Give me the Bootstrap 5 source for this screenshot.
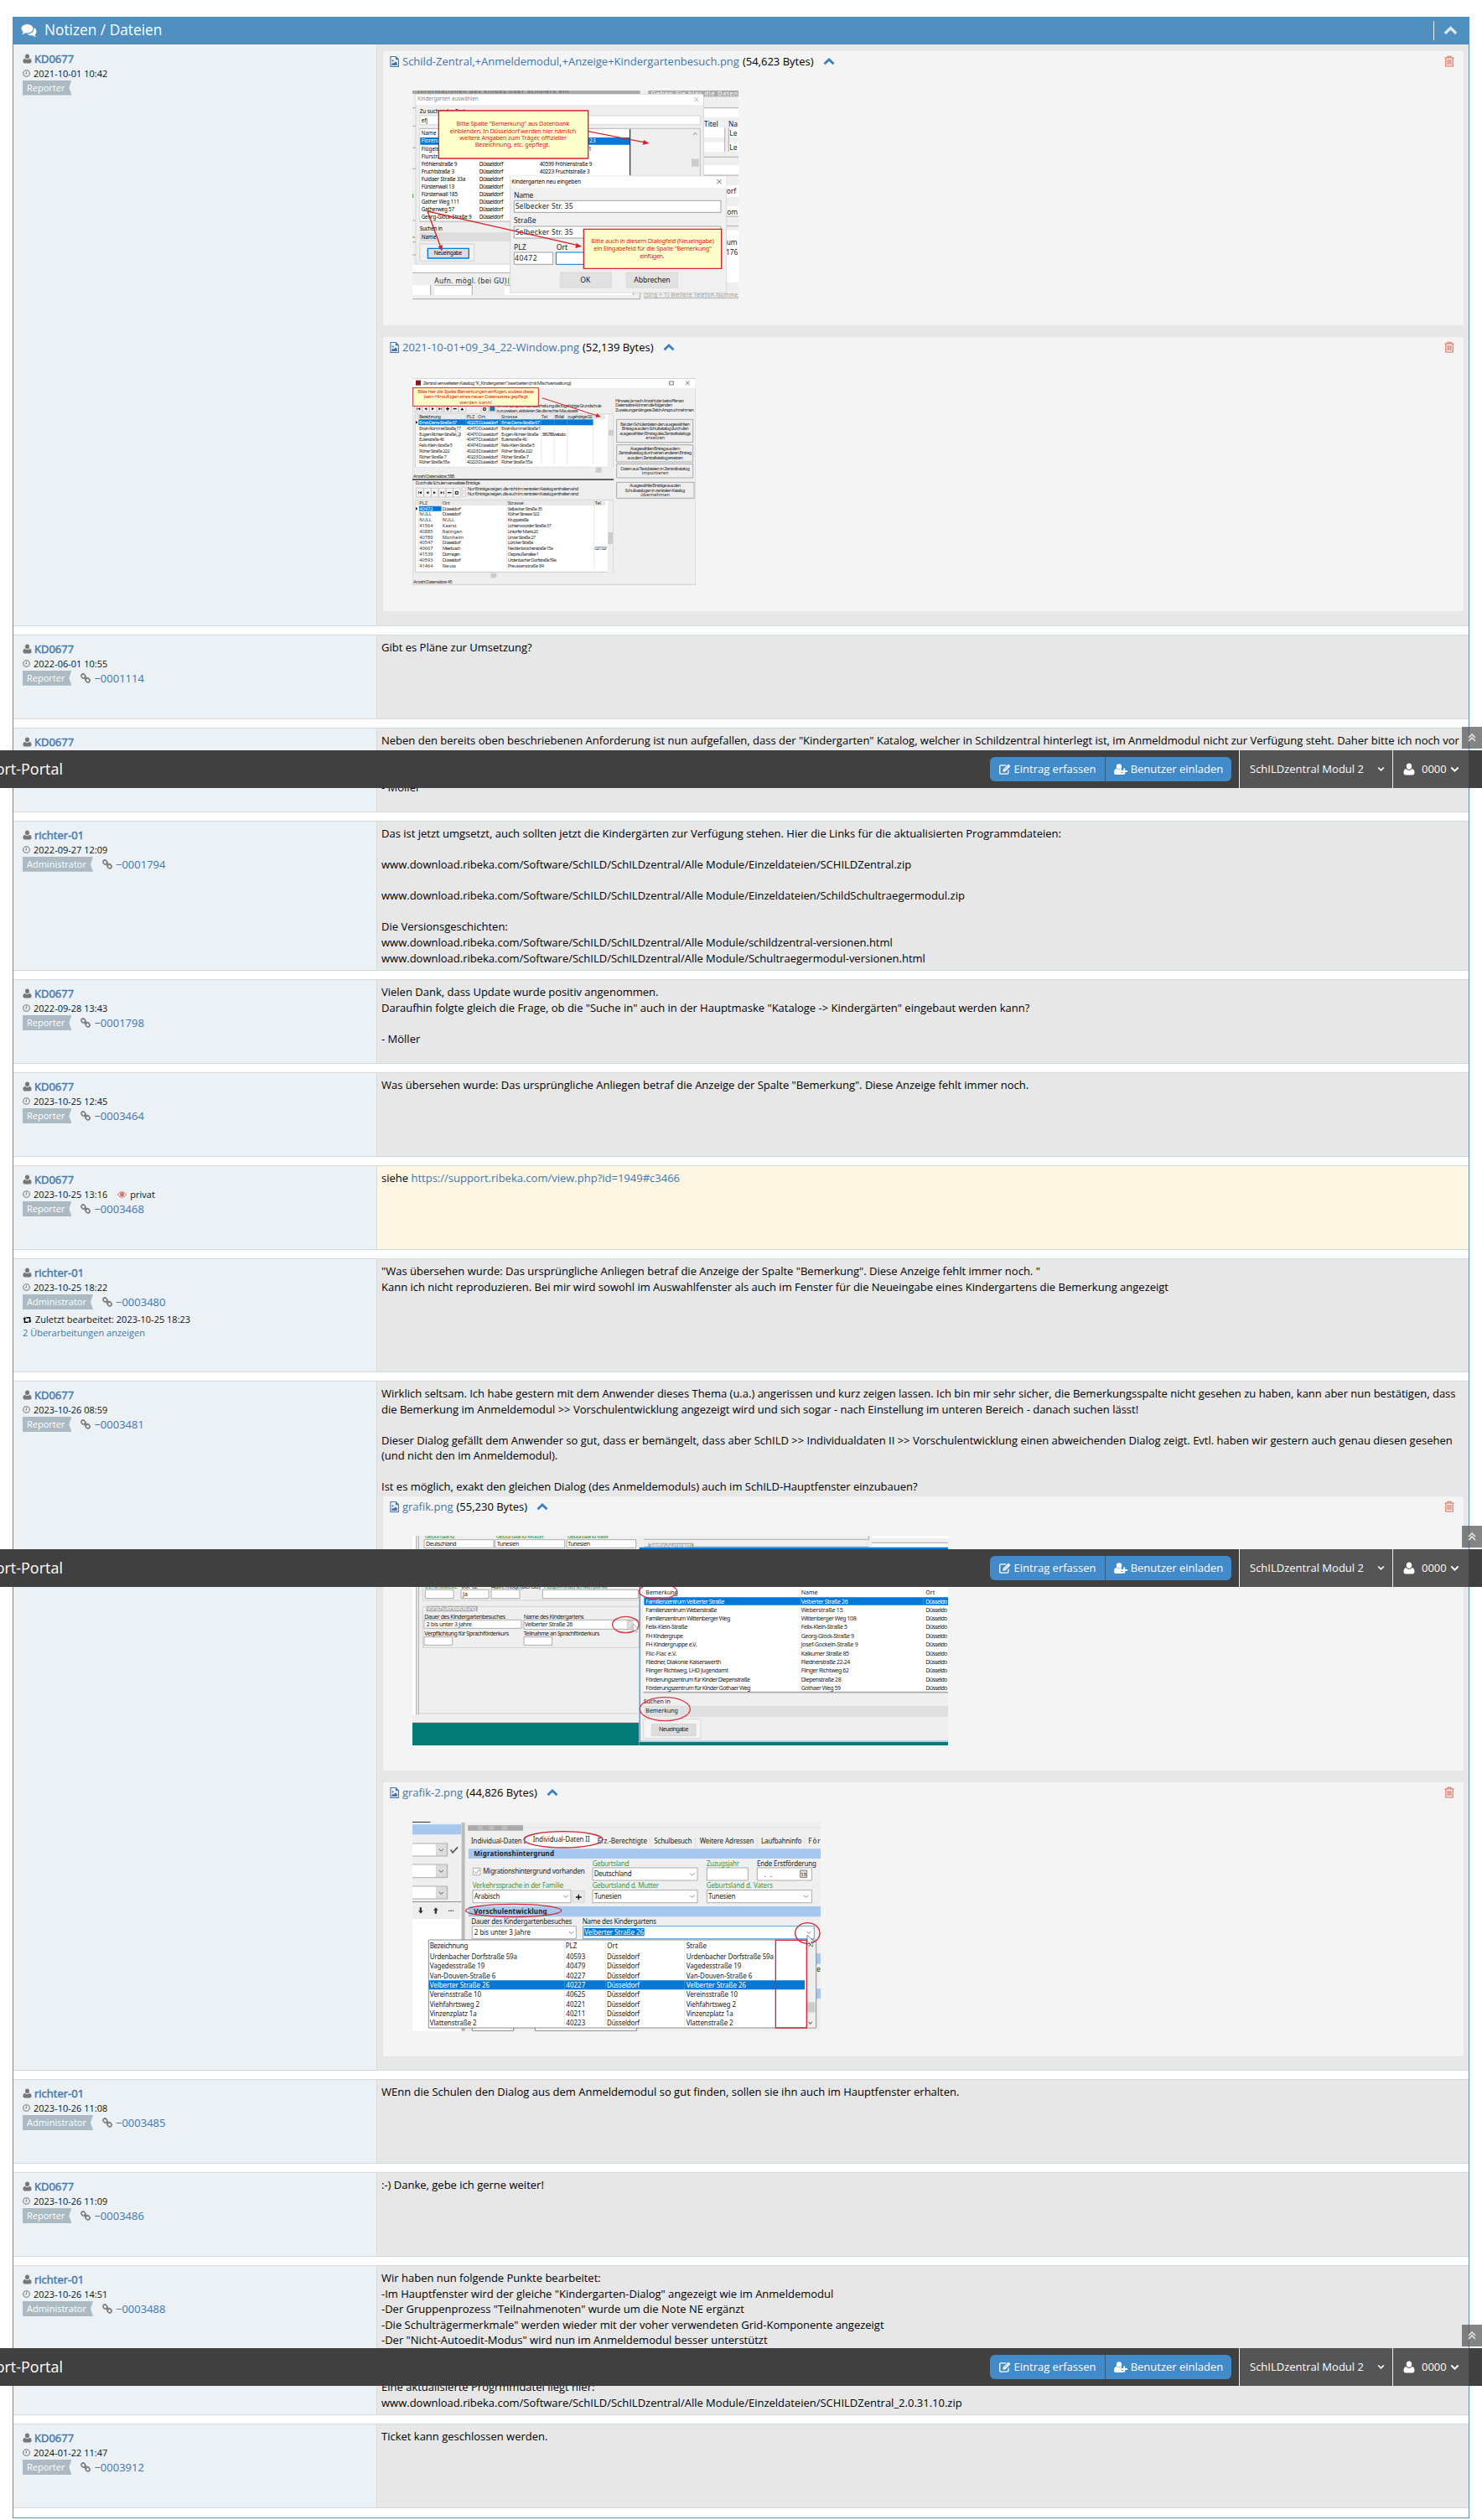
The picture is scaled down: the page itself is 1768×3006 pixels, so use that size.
<!DOCTYPE html>
<html lang="de">
<head>
<meta charset="utf-8">
<meta name="viewport" content="width=device-width, initial-scale=1">
<title>Notizen / Dateien</title>
<link href="https://cdn.jsdelivr.net/npm/bootstrap@5.3.0/dist/css/bootstrap.min.css" rel="stylesheet">
<style>
body{font-family:"Open Sans",sans-serif;font-size:13px;line-height:18.57px;color:#000;background:#fff;overflow-x:hidden}
a{color:#4177ae;text-decoration:none}
.page-frame{width:1768px;height:3006px;overflow:hidden}
.notes-panel{width:1738px;margin-left:15px;margin-top:20px;border:1px solid #5a90bd;border-top:0;height:2984px}
.notes-head{background:#4f90c1;color:#fff;height:33px;margin:0 -1px;padding:0 14px 0 10px;border-bottom:1px solid #5585ad}
.notes-head h4{font-size:17.3px;font-weight:400;line-height:32px;margin-left:1px}
.head-tool{border-left:1px solid #e8f1f8;height:23px;padding-left:11px}
.note-row{border:solid #d4dadb;border-width:1px 0;min-height:101px;margin-bottom:10px}
.note-row.first-note{border-top:0;height:694px}
.row-edited{height:136px}
.row-files{height:823px}
.who{width:434px;background:#ebf1f4;border-right:1px solid #d4dadb;padding:7px 0 0 11px;flex:none}
.first-note .who{padding-top:8px}
.said{background:#e7e7e7;padding:5px 6px 5px 5px;min-width:0;white-space:pre-line}
.said.secret{background:#fdf6e2}
.ic{fill:#777;flex:none}
.nick{-webkit-text-stroke:.45px #4177ae;margin-left:3px}
.stamp{font-size:11px;height:16px;line-height:16px;color:#111}
.role-tag{background:#abbac3;color:#fff;font-size:11px;height:18px;line-height:17px;padding:0 8px 0 5px;clip-path:polygon(0 0,100% 0,calc(100% - 3px) 50%,100% 100%,0 100%)}
.chain-ic{margin:0 4px 0 11px}
.attach{background:#f4f4f4;height:327px;border-radius:2px;padding:3px 11px 0 8px;margin-left:2px;white-space:normal}
.attach.in-first{margin-top:3px;margin-bottom:14px}
.attach.after-text{margin-top:2px;margin-bottom:14px}
.fold{color:#3a80bd;margin-left:10px}
.attach svg.shot{display:block;margin:25px 0 0 27px}
.overbar{position:absolute;left:0;width:1768px;height:45px;background:#404040;color:#fff}
.over-a{top:895px}.over-b{top:1848px}.over-c{top:2801px}
.brandtext{width:75px;font-size:18px;white-space:nowrap}
.bar-btn{background:#428bca;height:29px;color:#fff;width:137px;border-radius:6px 0 0 6px}
.bar-btn.invite{width:151px;border-left:1px solid #2b5c88;border-radius:0 6px 6px 0}
.bar-actions{margin-right:9px}
.bar-seg{background:#555;border-left:1px solid #eee;height:45px;width:183px;padding-left:12px}
.bar-seg.account{width:91px;margin-right:16px}
.totop{position:absolute;left:1744px;width:24px;height:26px;background:rgba(85,85,85,.72)}
.up-a{top:867px}.up-b{top:1820px}.up-c{top:2773px}
.shot text{font-family:"Noto Sans","Open Sans",sans-serif}
</style>
</head>
<body>
<svg width="0" height="0" class="position-absolute">
 <symbol id="user" viewBox="0 0 14 14"><path d="M7 0C9 0 10.300 1.500 10.300 3.600S9 7.400 7 7.400 3.700 5.700 3.700 3.600 5 0 7 0zM3.500 6.600C4.300 7.700 5.500 8.400 7 8.400s2.700-.7 3.500-1.800C12.500 6.900 13.500 9 13.500 11.200 13.500 12.800 12.500 14 11 14H3C1.500 14 .5 12.800.5 11.200.5 9 1.500 6.900 3.500 6.600z"/></symbol>
 <symbol id="clock" viewBox="0 0 14 14"><path fill-rule="evenodd" d="M7 1.900a5.100 5.100 0 1 0 0 10.200A5.100 5.100 0 0 0 7 1.900zM7 .2a6.800 6.800 0 1 1 0 13.600A6.800 6.800 0 0 1 7 .2zM6.500 3.500h1.400v4.700H4.300V6.900h2.200z"/></symbol>
 <symbol id="chain" viewBox="0 0 14 14"><g fill="none" stroke="#777" stroke-width="1.800"><rect x="1.500" y="1.100" width="5" height="6.300" rx="2.400" transform="rotate(-42 4 4.200)"/><rect x="7.500" y="6.500" width="5" height="6.300" rx="2.400" transform="rotate(-42 10 9.700)"/><path d="M5.300 5.300l3.500 3.500"/></g></symbol>
 <symbol id="eye" viewBox="0 0 14 10"><path fill="none" stroke="#d8614f" stroke-width="1.200" d="M.7 5C2.200 2.400 4.400 1 7 1s4.800 1.400 6.300 4C11.800 7.600 9.600 9 7 9S2.200 7.600.7 5z"/><circle cx="7" cy="4.600" r="3.100" fill="#d8614f"/><path d="M5.600 4.500A1.500 1.500 0 0 1 7 3" fill="none" stroke="#fff" stroke-width=".6"/></symbol>
 <symbol id="retweet" viewBox="0 0 15 10"><path d="M3 0l3 3.500H4V8h4.500L10 10H2.500Q2 10 2 9.500v-6H0zM12 10L9 6.500h2V2H6.500L5 0h7.500q.5 0 .5.500v6h2z"/></symbol>
 <symbol id="imgfile" viewBox="0 0 12 14"><path d="M1 .5h6.800L11.400 4v9.500H1z" fill="none" stroke="#4177ae" stroke-width="1.200"/><path d="M7.500.5v4h4M2.500 12V9.800L4 8.300l1 1 2.600-2.700 2 2V12z" fill="#4177ae"/><circle cx="3.900" cy="5.800" r="1.200" fill="#4177ae"/></symbol>
 <symbol id="chev" viewBox="0 0 14 9"><path d="M1.500 7.300L7 2l5.500 5.300" fill="none" stroke="currentColor" stroke-width="2.800"/></symbol>
 <symbol id="trash" viewBox="0 0 12 14"><path d="M.5 3h11M4 3V1.200h4V3M1.800 3v10h8.400V3M4.100 5v6M6 5v6M7.900 5v6" fill="none" stroke="#dd6c5c" stroke-width="1.100"/></symbol>
 <symbol id="down" viewBox="0 0 10 7"><path d="M1.200 1.200L5 5l3.800-3.800" fill="none" stroke="#fff" stroke-width="1.700"/></symbol>
 <symbol id="edit" viewBox="0 0 14 13"><path d="M11 7.500v3q0 1.700-1.700 1.700h-7Q.7 12.200.7 10.500v-7Q.7 1.800 2.300 1.800h6" fill="none" stroke="#fff" stroke-width="1.300"/><path fill="#fff" d="M4.500 9.500V7L11 .5 13.500 3 7 9.500z"/><path d="M6 7.600l5-5" stroke="#428bca" stroke-width=".7"/></symbol>
 <symbol id="adduser" viewBox="0 0 16 13"><g fill="#fff"><circle cx="6" cy="3.400" r="3.200"/><path d="M3 6q3 2.300 6 0v2h-.5v2.700h2.700V13H2Q0 13 0 11q0-5 3-5zM11.200 5.500h2V8H16v2h-2.800v2.500h-2V10H8.800V8h2.400z"/></g></symbol>
 <symbol id="dblup" viewBox="0 0 10 10"><path d="M1 5l4-4 4 4M1 9l4-4 4 4" fill="none" stroke="#e5e5e5" stroke-width="1.700"/></symbol>
 <symbol id="comments" viewBox="0 0 19 17"><path fill="#fff" d="M7.500 1C11.500 1 14.500 3.300 14.500 6.200s-3 5.200-7 5.200q-1 0-2-.2Q3.300 12.800 1 13q1.600-1.200 1.700-2.800Q.5 8.600.5 6.200C.5 3.300 3.500 1 7.500 1zM15.500 5q3 1.500 3 4.400 0 2.200-1.900 3.700.2 1.800 1.600 2.900-2.200-.1-4.400-1.800-3.500.6-6.300-1.500 4-.1 6.300-2.200T15.500 5z"/></symbol>
</svg>
<main class="page-frame position-relative">
<section class="notes-panel">
 <header class="notes-head d-flex align-items-center">
  <svg class="me-2" width="19" height="17"><use href="#comments"/></svg><h4 class="mb-0 mt-0 flex-grow-1">Notizen / Dateien</h4>
  <div class="head-tool d-flex align-items-center"><svg width="17" height="11" style="color:#e2e7ec"><use href="#chev"/></svg></div>
 </header>

 <article class="note-row first-note d-flex">
  <div class="who" data-name="KD0677" data-date="2021-10-01 10:42" data-role="Reporter"></div>
  <div class="said flex-grow-1"><div class="attach in-first"><div class="d-flex align-items-center"><svg class="me-1" width="11" height="13"><use href="#imgfile"/></svg><a href="#">Schild-Zentral,+Anmeldemodul,+Anzeige+Kindergartenbesuch.png</a><span class="ms-1">(54,623 Bytes)</span><svg class="fold" width="16" height="9"><use href="#chev"/></svg><svg class="ms-auto" width="12" height="14"><use href="#trash"/></svg></div>
<svg class="shot" width="389" height="250" viewBox="36 55 1167 750" preserveAspectRatio="none" font-size="19">
<path fill="#efefef" d="M36 55h1167v750H36z"/><path fill="#aaa" d="M36 55h815v12H36zM880 55h323v22H880z"/><text x="55" y="65" font-size="20" fill="#555" textLength="540">Informationen des Kindes oder Schülers ein</text><text x="890" y="72" fill="#fff" font-size="22" textLength="310">Geben Sie hier die Daten</text>
<path fill="#fff" d="M1080 117h123v33h-123zM1080 188h74v35h-74zM1168 188h35v35h-35zM1080 240h74v34h-74zM1168 240h35v34h-35zM1080 322h123v36h-123zM1160 395h43v40h-43zM1160 470h43v35h-43zM1160 555h43v186h-43zM36 678h349v28H36zM36 752h65v35H36zM115 752h135v35H115zM365 752h461v35H365z"/><g stroke="#888" stroke-width="2" fill="none"><path d="M1154 188v86M1168 188v86M1080 117h123M1080 293h123M1080 358h123M1160 505h43M1160 540h43M36 117h12M36 182h12M36 260h12M36 335h12M36 520h12M36 597h12M36 643h12M36 707h815v94H36M101 752v35M115 752h135v35M365 752h461v35M865 797h338"/></g>
<g font-size="25" fill="#222"><text x="1080" y="183">Titel</text><text x="1167" y="183">Na</text><text x="1171" y="218">Le</text><text x="1171" y="269">Le</text><text x="1160" y="424">orf</text><text x="1162" y="498">om</text><text x="1160" y="606">um</text><text x="1158" y="642">176</text><text x="115" y="744" textLength="258">Aufn. mögl. (bei GU)</text></g><text x="865" y="793" fill="#999" textLength="335">(Strg + T) Weitere Telefon-Numme</text><path stroke="#3c9b3c" d="M380 725v22M38 425v14M36 580h9" stroke-width="3"/>
<path fill="#eee" stroke="#aaa" d="M48 68h1030v608H48z"/><path fill="#fff" d="M49 69h1028v37H49z"/><text x="54" y="92" fill="#888" textLength="218">Kindergarten auswählen</text><text x="62" y="136">Zu suchender Text</text><path d="M1045 80l14 14m0-14l-14 14" stroke="#888" stroke-width="2"/><path fill="#fff" stroke="#999" d="M62 145h1004v32H62zM62 192h753v332H62z"/><text x="68" y="169">efj</text><text x="68" y="214">Name</text><path fill="#0078d7" d="M64 223h751v26H64z"/><path stroke="#111" stroke-width="3" d="M815 193v165"/><path stroke="#aaa" stroke-width="2" d="M62 191h1004M1066 191v330M62 523h325"/><path fill="#ccc" d="M1035 300h26v27h-26z"/><path d="M1041 213l7-6 7 6" stroke="#444" stroke-width="2" fill="none"/>
<g font-size="19"><text x="68" y="242" fill="#fff">Florenzer</text><text x="670" y="242" fill="#fff">23</text><text x="68" y="270">Flügelstr</text><text x="666" y="270">1</text><text x="68" y="297">Flurstraße</text><text x="68" y="324" textLength="128">Fröhlenstraße 9</text><text x="68" y="351" textLength="118">Fruchtstraße 3</text><text x="68" y="378" textLength="158">Fuldaer Straße 33a</text><text x="68" y="405" textLength="118">Fürstenwall 13</text><text x="68" y="433" textLength="130">Fürstenwall 185</text><text x="68" y="460" textLength="136">Gather Weg 111</text><text x="68" y="487" textLength="118">Gatherweg 57</text><text x="68" y="514" textLength="180">Georg-Glock-Straße 9</text>
<text x="275" y="324" textLength="86">Düsseldorf</text><text x="275" y="351" textLength="86">Düsseldorf</text><text x="275" y="378" textLength="86">Düsseldorf</text><text x="275" y="405" textLength="86">Düsseldorf</text><text x="275" y="433" textLength="86">Düsseldorf</text><text x="275" y="460" textLength="86">Düsseldorf</text><text x="275" y="487" textLength="86">Düsseldorf</text><text x="275" y="514" textLength="86">Düsseldorf</text><text x="491" y="324" textLength="188">40599 Fröhlenstraße 9</text><text x="491" y="351" textLength="180">40223 Fruchtstraße 3</text></g>
<text x="62" y="555" textLength="82">Suchen in</text><path fill="#ddd" d="M62 563h325v32H62z"/><text x="68" y="586">Name</text><path fill="#f1f1f1" stroke="#999" d="M62 604h195v61H62z"/><path fill="#ddd" stroke="#0078d7" stroke-width="4" d="M91 620h147v35H91z"/><text x="113" y="644" textLength="100">Neueingabe</text>
<path fill="#f0f0f0" stroke="#aaa" d="M386 361h774v418H386z"/><path fill="#fff" d="M387 362h772v41H387z"/><text x="391" y="387" textLength="248" font-size="20">Kindergarten neu eingeben</text><path d="M1126 373l16 16m0-16l-16 16" stroke="#222" stroke-width="2"/><path fill="#fff" stroke="#777" stroke-width="2" d="M400 449h740v42H400zM400 541h740v42H400zM400 634h139v43H400z"/><path fill="#fff" stroke="#0078d7" stroke-width="3" d="M550 634h110v43H550z"/><g font-size="26" fill="#222"><text x="399" y="438" textLength="70">Name</text><text x="404" y="478" textLength="207">Selbecker Str. 35</text><text x="399" y="530" textLength="80">Straße</text><text x="404" y="571" textLength="207">Selbecker Str. 35</text><text x="399" y="624">PLZ</text><text x="551" y="624">Ort</text><text x="402" y="664" textLength="80">40472</text></g><path fill="#e1e1e1" stroke="#bbb" d="M565 706h183v55H565zM802 706h184v55H802z"/><g font-size="26" fill="#222"><text x="637" y="742">OK</text><text x="829" y="742" textLength="130">Abbrechen</text></g>
<g fill="#ffc" stroke="#d72229" stroke-width="4"><path d="M130 127h535v171H130zM649 551h493v141H649z"/></g><g stroke="#d72229" stroke-width="4" fill="none"><path d="M665 201l200 39M136 612L90 487l535 121"/></g><path fill="#d72229" d="M884 244l-24 5 4-17zM643 613l-24 6 4-18zM142 630l-14-17 16-5z"/>
<g fill="#e11b1b" text-anchor="middle" font-size="22" style="--f:1"><text x="396" y="181" textLength="405">Bitte Spalte "Bemerkung" aus Datenbank</text><text x="396" y="207" textLength="452">einblenden. In Düsseldorf werden hier nämlich</text><text x="397" y="232" textLength="384">weitere Angaben zum Träger, offizieller</text><text x="394" y="257" textLength="268">Bezeichnung, etc. gepflegt.</text><text x="896" y="602" textLength="440">Bitte auch in diesem Dialogfeld (Neueingabe)</text><text x="896" y="628" textLength="422">ein Eingabefeld für die Spalte "Bemerkung"</text><text x="894" y="654" textLength="88">einfügen.</text></g>
</svg></div><div class="attach"><div class="d-flex align-items-center"><svg class="me-1" width="11" height="13"><use href="#imgfile"/></svg><a href="#">2021-10-01+09_34_22-Window.png</a><span class="ms-1">(52,139 Bytes)</span><svg class="fold" width="16" height="9"><use href="#chev"/></svg><svg class="ms-auto" width="12" height="14"><use href="#trash"/></svg></div>
<svg class="shot" width="338" height="250" viewBox="36 58 1014 750" preserveAspectRatio="none" font-size="17" fill="#333">
<path fill="#efefef" stroke="#888" d="M36 66h1014v737H36z"/><path fill="#fff" d="M37 67h1012v32H37z"/><path d="M48 72h18v18H48z" fill="#8a1420"/><text x="74" y="87" font-size="18" textLength="530">Zentral verwalteten Katalog "K_Kindergarten" bearbeiten (mit Mischverwaltung)</text><path fill="none" stroke="#333" stroke-width="2" d="M956 76h14v12h-14zM1014 75l14 13m0-13l-14 13"/>
<g fill="#f3f3f3" stroke="#888"><path d="M45 163h26v22H45zM71 163h26v22H71zM97 163h26v22H97zM123 163h26v22H123zM149 163h26v22H149zM175 163h26v22H175zM201 163h26v22H201zM282 163h26v22H282zM309 163h26v22H309zM50 458h26v32H50zM77 458h26v32H77zM103 458h26v32H103zM130 458h26v32H130zM156 458h25v32H156zM182 458h26v32H182z"/></g><path fill="#111" d="M52 169h2v10h-2zM64 169v10l-9-5zM88 169v10l-9-5zM105 169v10l9-5zM130 169v10l8-5zM140 169h2v10h-2zM160 168h4v12h-4zM156 172h12v4h-12zM182 172h12v4h-12zM208 179h12l-6-9zM57 469h2v10h-2zM69 469v10l-9-5zM94 469v10l-9-5zM111 469v10l9-5zM137 469v10l8-5zM147 469h2v10h-2zM162 472h13v4h-13z"/><path fill="none" stroke="#111" stroke-width="3" d="M290 179v-8h8v8h-8M190 479v-9h9v9h-9"/><path fill="#2378a8" d="M313 166h18v16h-18z"/>
<text x="337" y="170" textLength="376">Um für die Sprachstandserhebung die zugehörige Grundschule</text><text x="337" y="188" textLength="292">zuzuweisen, aktivieren Sie die rechte Maustaste</text>
<path fill="#fff" stroke="#777" d="M46 193h708v190H46zM46 500h708v258H46z"/><path fill="#e9e9e9" d="M47 194h680v18H47zM47 501h680v20H47z"/><path fill="#0078d7" d="M58 212h625v21H58zM60 522h80v18H60z"/><path stroke="#bbb" d="M227 193v180M268 193v180M350 193v180M497 193v180M543 193v180M590 193v180M683 193v180M56 193v180M140 500v245M374 500v245M686 500v245M58 500v245"/><path fill="#eee" d="M735 194h19v207h-19zM46 383h690v20H46zM735 501h19v275h-19zM46 760h690v20H46z"/><path fill="#ccc" d="M738 249h18v21h-18zM692 384h21v18h-21zM736 616h17v42h-17zM316 762h21v17h-21z"/><path fill="#111" d="M48 216l7 6-7 6zM48 525l7 6-7 6z"/>
<g><text x="60" y="207" textLength="78">Bezeichnung</text><text x="230" y="207">PLZ</text><text x="271" y="207">Ort</text><text x="354" y="207">Strasse</text><text x="498" y="207">Tel</text><text x="545" y="207" textLength="34">EMail</text><text x="592" y="207" textLength="88">zugehörige GS</text></g>
<g fill="#fff"><text x="60" y="229" textLength="135">Ernst-Derra-Straße 67</text><text x="230" y="229" textLength="112">40225 Düsseldorf</text><text x="354" y="229" textLength="138">Ernst-Derra-Straße 67</text><text x="61" y="537">40472</text></g>
<g><text x="60" y="250" textLength="150">Erwin-Rommel-Straße 17</text><text x="60" y="270" textLength="150">Eugen-Richter-Straße 58</text><text x="60" y="290" textLength="90">Eulerstraße 46</text><text x="60" y="311" textLength="120">Felix-Klein-Straße 5</text><text x="60" y="331" textLength="110">Flöher Straße 222</text><text x="60" y="351" textLength="98">Flöher Straße 7</text><text x="60" y="371" textLength="110">Flöher Straße 55a</text>
<text x="230" y="250" textLength="112">40470 Düsseldorf</text><text x="230" y="270" textLength="112">40470 Düsseldorf</text><text x="230" y="290" textLength="112">40477 Düsseldorf</text><text x="230" y="311" textLength="112">40474 Düsseldorf</text><text x="230" y="331" textLength="112">40223 Düsseldorf</text><text x="230" y="351" textLength="112">40223 Düsseldorf</text><text x="230" y="371" textLength="112">40223 Düsseldorf</text>
<text x="354" y="250" textLength="142">Erwin-Rommel-Straße 1</text><text x="354" y="270" textLength="134">Eugen-Richter-Straße</text><text x="499" y="270" textLength="88">386,788 webdoc</text><text x="354" y="290" textLength="92">Eulerstraße 46</text><text x="354" y="311" textLength="120">Felix-Klein-Straße 5</text><text x="354" y="331" textLength="112">Flöher Straße 222</text><text x="354" y="351" textLength="98">Flöher Straße 7</text><text x="354" y="371" textLength="112">Flöher Straße 55a</text></g>
<text x="39" y="420" textLength="148">Anzahl Datensätze: 588</text><path d="M36 427h720" stroke="#333" stroke-width="4"/><text x="47" y="446" textLength="232">Durch die Schulen verwaltete Einträge</text><path fill="#fff" stroke="#777" d="M214 455h12v12h-12zM214 475h12v12h-12z"/><text x="233" y="466" textLength="398">Nur Einträge zeigen, die nicht im zentralen Katalog enthalten sind</text><text x="233" y="485" textLength="398">Nur Einträge zeigen, die auch im zentralen Katalog enthalten sind</text>
<g><text x="61" y="516">PLZ</text><text x="143" y="516">Ort</text><text x="377" y="516">Strasse</text><text x="689" y="516">Tel</text><text x="61" y="557">NULL</text><text x="61" y="577">NULL</text><text x="61" y="598">41564</text><text x="61" y="618">40885</text><text x="61" y="639">40789</text><text x="61" y="659">40547</text><text x="61" y="679">40667</text><text x="61" y="700">41539</text><text x="61" y="720">40593</text><text x="61" y="741">41464</text><text x="143" y="537" textLength="66">Düsseldorf</text><text x="143" y="557" textLength="66">Düsseldorf</text><text x="143" y="577">NULL</text><text x="143" y="598">Kaarst</text><text x="143" y="618">Ratingen</text><text x="143" y="639">Monheim</text><text x="143" y="659" textLength="66">Düsseldorf</text><text x="143" y="679" textLength="66">Meerbusch</text><text x="143" y="700" textLength="64">Dormagen</text><text x="143" y="720" textLength="66">Düsseldorf</text><text x="143" y="741">Neuss</text><text x="377" y="537" textLength="124">Selbecker Straße 35</text><text x="377" y="557" textLength="114">Kölner Strasse 322</text><text x="377" y="577" textLength="76">Kruppstraße</text><text x="377" y="598" textLength="156">Lichtenvoorder Straße 37</text><text x="377" y="618" textLength="110">Lintorfer Markt 20</text><text x="377" y="639" textLength="100">Linzer Straße 27</text><text x="377" y="659" textLength="92">Löricker Straße</text><text x="377" y="679" textLength="163">Necklenbroicherstraße 15a</text><text x="377" y="700" textLength="112">Ostpreußenallee 1</text><text x="377" y="720" textLength="175">Urdenbacher Dorfstraße 59a</text><text x="377" y="741" textLength="130">Preussenstraße 84</text><text x="688" y="679" textLength="44">02132/</text></g><text x="39" y="798" textLength="140">Anzahl Datensätze: 45</text>
<g><text x="762" y="151" textLength="246">Hinweis: Je nach Anzahl der betroffenen</text><text x="762" y="167" textLength="205">Datensätze können die folgenden</text><text x="762" y="183" textLength="282">Zuweisungen längere Zeit in Anspruch nehmen</text></g><g fill="#eee" stroke="#888" stroke-width="2"><path d="M767 212h273v82H767zM767 303h273v61H767zM767 371h273v50H767zM767 437h277v57H767z"/></g>
<g text-anchor="middle"><text x="905" y="235" textLength="250">Bei den Schülerdaten den ausgewählten</text><text x="905" y="251" textLength="240">Eintrag aus dem Schulkatalog durch den</text><text x="905" y="267" textLength="255">ausgewählten Eintrag des Zentralkatalogs</text><text x="905" y="283">ersetzen</text><text x="905" y="321" textLength="180">Ausgewählten Eintrag aus dem</text><text x="905" y="338" textLength="262">Zentralkatalog durch einen anderen Eintrag</text><text x="905" y="354" textLength="200">aus dem Zentralkatalog ersetzen</text><text x="905" y="393" textLength="248">Daten aus Textdateien in Zentralkatalog</text><text x="905" y="409">importieren</text><text x="905" y="454" textLength="184">Ausgewählte Einträge aus den</text><text x="905" y="472" textLength="215">Schulkatalogen in zentralen Katalog</text><text x="905" y="488">übernehmen</text></g>
<path fill="#ffc" stroke="#d72229" stroke-width="3" d="M37 99h450v65H37z"/><g fill="#e11b1b" text-anchor="middle" font-size="18"><text x="263" y="119" textLength="416">Bitte hier die Spalte Bemerkungen einfügen, sodass diese</text><text x="263" y="137" textLength="372">beim Hinzufügen eines neuen Datensatzes gepflegt</text><text x="263" y="156">werden kann!</text></g><path d="M500 135l198 64" stroke="#d72229" stroke-width="3"/><path fill="#d72229" d="M711 203l-20 2 5-15z"/><path d="M190 250l4 24 5-6 4 8 3-2-4-8 7-1z" fill="#fff" stroke="#333"/>
</svg></div></div>
 </article>

 <article class="note-row d-flex"><div class="who" data-name="KD0677" data-date="2022-06-01 10:55" data-role="Reporter" data-note="0001114"></div><div class="said flex-grow-1">Gibt es Pläne zur Umsetzung?</div></article>

 <article class="note-row d-flex"><div class="who" data-name="KD0677"></div><div class="said flex-grow-1">Neben den bereits oben beschriebenen Anforderung ist nun aufgefallen, dass der "Kindergarten" Katalog, welcher in Schildzentral hinterlegt ist, im Anmeldmodul nicht zur Verfügung steht. Daher bitte ich noch vor<br><br><br>- Möller</div></article>

 <article class="note-row d-flex"><div class="who" data-name="richter-01" data-date="2022-09-27 12:09" data-role="Administrator" data-note="0001794"></div><div class="said flex-grow-1">Das ist jetzt umgsetzt, auch sollten jetzt die Kindergärten zur Verfügung stehen. Hier die Links für die aktualisierten Programmdateien:

www.download.ribeka.com/Software/SchILD/SchILDzentral/Alle Module/Einzeldateien/SCHILDZentral.zip

www.download.ribeka.com/Software/SchILD/SchILDzentral/Alle Module/Einzeldateien/SchildSchultraegermodul.zip

Die Versionsgeschichten:
www.download.ribeka.com/Software/SchILD/SchILDzentral/Alle Module/schildzentral-versionen.html
www.download.ribeka.com/Software/SchILD/SchILDzentral/Alle Module/Schultraegermodul-versionen.html</div></article>

 <article class="note-row d-flex"><div class="who" data-name="KD0677" data-date="2022-09-28 13:43" data-role="Reporter" data-note="0001798"></div><div class="said flex-grow-1">Vielen Dank, dass Update wurde positiv angenommen.
Daraufhin folgte gleich die Frage, ob die "Suche in" auch in der Hauptmaske "Kataloge -&gt; Kindergärten" eingebaut werden kann?

- Möller</div></article>

 <article class="note-row d-flex"><div class="who" data-name="KD0677" data-date="2023-10-25 12:45" data-role="Reporter" data-note="0003464"></div><div class="said flex-grow-1">Was übersehen wurde: Das ursprüngliche Anliegen betraf die Anzeige der Spalte "Bemerkung". Diese Anzeige fehlt immer noch.</div></article>

 <article class="note-row d-flex"><div class="who" data-name="KD0677" data-date="2023-10-25 13:16" data-role="Reporter" data-note="0003468" data-private="privat"></div><div class="said secret flex-grow-1">siehe <a href="#">https://support.ribeka.com/view.php?id=1949#c3466</a></div></article>

 <article class="note-row row-edited d-flex"><div class="who" data-name="richter-01" data-date="2023-10-25 18:22" data-role="Administrator" data-note="0003480" data-edited="Zuletzt bearbeitet: 2023-10-25 18:23"></div><div class="said flex-grow-1">"Was übersehen wurde: Das ursprüngliche Anliegen betraf die Anzeige der Spalte "Bemerkung". Diese Anzeige fehlt immer noch. "
Kann ich nicht reproduzieren. Bei mir wird sowohl im Auswahlfenster als auch im Fenster für die Neueingabe eines Kindergartens die Bemerkung angezeigt</div></article>

 <article class="note-row row-files d-flex"><div class="who" data-name="KD0677" data-date="2023-10-26 08:59" data-role="Reporter" data-note="0003481"></div><div class="said flex-grow-1">Wirklich seltsam. Ich habe gestern mit dem Anwender dieses Thema (u.a.) angerissen und kurz zeigen lassen. Ich bin mir sehr sicher, die Bemerkungsspalte nicht gesehen zu haben, kann aber nun bestätigen, dass
die Bemerkung im Anmeldemodul &gt;&gt; Vorschulentwicklung angezeigt wird und sich sogar - nach Einstellung im unteren Bereich - danach suchen lässt!

Dieser Dialog gefällt dem Anwender so gut, dass er bemängelt, dass aber SchILD &gt;&gt; Individualdaten II &gt;&gt; Vorschulentwicklung einen abweichenden Dialog zeigt. Evtl. haben wir gestern auch genau diesen gesehen
(und nicht den im Anmeldemodul).

Ist es möglich, exakt den gleichen Dialog (des Anmeldemoduls) auch im SchILD-Hauptfenster einzubauen?<div class="attach after-text"><div class="d-flex align-items-center"><svg class="me-1" width="11" height="13"><use href="#imgfile"/></svg><a href="#">grafik.png</a><span class="ms-1">(55,230 Bytes)</span><svg class="fold" width="16" height="9"><use href="#chev"/></svg><svg class="ms-auto" width="12" height="14"><use href="#trash"/></svg></div>
<svg class="shot" width="639" height="250" viewBox="36 36 1917 750" preserveAspectRatio="none" font-size="21" fill="#222">
<path fill="#efefef" d="M36 36h1917v750H36z"/><path fill="#fff" d="M78 50h249v29H78zM332 50h249v29H332zM588 50h248v29H588zM1680 36h273v9h-273zM1680 62h273v14h-273zM36 36h12v640H36z"/><g fill="none" stroke="#888" stroke-width="2"><path d="M78 50h249v29H78zM332 50h249v29H332zM588 50h248v29H588zM865 49h804v-13M865 75h804M50 36v640M58 36v640M1680 61h273"/></g><g fill="#368936"><text x="80" y="46" textLength="107">Geburtsland</text><text x="335" y="46" textLength="173">Geburtsland Mutter</text><text x="590" y="46" textLength="150">Geburtsland Vater</text></g><text x="84" y="71" textLength="110">Deutschland</text><text x="338" y="71" textLength="80">Tunesien</text><text x="592" y="71" textLength="80">Tunesien</text><path fill="#aaa" d="M880 62h162v18H880z"/><text x="884" y="77" fill="#fff" textLength="152">Telefon-Nummern</text><path fill="#0078d7" d="M848 77h1105v694H848z"/><path fill="#efefef" d="M851 210h1102v560H851z"/>
<g fill="#368936"><text x="82" y="224" textLength="115">Zentralstelle</text><text x="506" y="224" textLength="228">Haupt-Förderschwerpunkt</text></g><text x="210" y="224">Vor G.</text><text x="318" y="224" textLength="176">Aufn. mögl. (bei GU)</text><g fill="#fff" stroke="#888" stroke-width="2"><path d="M82 229h101v31H82zM210 229h99v31H210zM318 229h102v31H318zM502 229h342v31H502zM78 337h348v30H78zM435 337h412v33H435zM78 398h101v29H78zM435 398h101v29H435z"/></g><text x="216" y="253">Ja</text><path fill="none" stroke="#999" d="M73 200v67h775M73 292v144h775v-147H73M58 672h790"/><path fill="#aaa" d="M86 287h183v20H86z"/><text x="88" y="304" fill="#fff" textLength="176">Vorschulentwicklung</text><text x="79" y="333" textLength="290">Dauer des Kindergartenbesuches</text><text x="434" y="333" textLength="216">Name des Kindergartens</text><text x="86" y="361" textLength="163">2 bis unter 3 Jahre</text><text x="438" y="361" textLength="172">Velberter Straße 26</text><text x="79" y="392" textLength="302">Verpflichtung für Sprachförderkurs</text><text x="434" y="392" textLength="272">Teilnahme an Sprachförderkurs</text><path fill="#ddd" stroke="#888" d="M805 340h18v26h-18z"/>
<path fill="#057b78" d="M36 706h810v80H36zM847 773h1106v13H847z"/><path d="M36 706h810" stroke="#555" stroke-width="3"/><path fill="#fff" d="M863 220h1090v374H863z"/><path fill="#0078d7" d="M865 256h1088v28H865z"/><path d="M863 596h1090" stroke="#aaa" stroke-width="5"/><path fill="none" stroke="#ccc" d="M1425 220v374M1865 220v374"/><g><text x="871" y="245">Bemerkung</text><text x="1427" y="245">Name</text><text x="1873" y="245">Ort</text></g><g fill="#fff"><text x="871" y="278" textLength="282">Familienzentrum Velberter Straße</text><text x="1427" y="278" textLength="168">Velberter Straße 26</text><text x="1873" y="278" textLength="78">Düsseldo</text></g>
<g><text x="871" y="309" textLength="255">Familienzentrum Weberstraße</text><text x="871" y="340" textLength="303">Familienzentrum Wittenberger Weg</text><text x="871" y="370" textLength="150">Felix-Klein-Straße</text><text x="871" y="402" textLength="134">FH Kindergrupe</text><text x="871" y="433" textLength="184">FH Kindergruppe e.V.</text><text x="871" y="464" textLength="112">Flic-Flac e.V.</text><text x="871" y="495" textLength="270">Fliedner, Diakonie Kaiserswerth</text><text x="871" y="526" textLength="296">Flinger Richtweg, LHD Jugendamt</text><text x="871" y="557" textLength="374">Förderungszentrum für Kinder Diepenstraße</text><text x="871" y="588" textLength="376">Förderungszentrum für Kinder Gothaer Weg</text><text x="1427" y="309" textLength="150">Weberstraße 15</text><text x="1427" y="340" textLength="198">Wittenberger Weg 108</text><text x="1427" y="370" textLength="166">Felix-Klein-Straße 5</text><text x="1427" y="402" textLength="190">Georg-Glock-Straße 9</text><text x="1427" y="433" textLength="204">Josef-Gockeln-Straße 9</text><text x="1427" y="464" textLength="172">Kalkumer Straße 85</text><text x="1427" y="495" textLength="176">Fliednerstraße 22-24</text><text x="1427" y="526" textLength="172">Flinger Richtweg 62</text><text x="1427" y="557" textLength="144">Diepenstraße 28</text><text x="1427" y="588" textLength="142">Gothaer Weg 59</text><text x="1873" y="309" textLength="78">Düsseldo</text><text x="1873" y="340" textLength="78">Düsseldo</text><text x="1873" y="370" textLength="78">Düsseldo</text><text x="1873" y="402" textLength="78">Düsseldo</text><text x="1873" y="433" textLength="78">Düsseldo</text><text x="1873" y="464" textLength="78">Düsseldo</text><text x="1873" y="495" textLength="78">Düsseldo</text><text x="1873" y="526" textLength="78">Düsseldo</text><text x="1873" y="557" textLength="78">Düsseldo</text><text x="1873" y="588" textLength="78">Düsseldo</text></g>
<text x="863" y="635">Suchen in</text><path fill="#dfdfdf" d="M865 644h1088v40H865z"/><text x="871" y="668">Bemerkung</text><path fill="#f4f4f4" stroke="#aaa" d="M863 692h205v69H863z"/><path fill="#ddd" stroke="#bbb" d="M892 709h158v43H892z"/><text x="918" y="736" textLength="106">Neueingabe</text><g fill="none" stroke="#d63a49" stroke-width="4"><ellipse cx="915" cy="235" rx="68" ry="27"/><ellipse cx="799" cy="354" rx="47" ry="29"/><ellipse cx="940" cy="656" rx="90" ry="42"/></g><path fill="#fff" stroke="#333" d="M826 350v28l6-5 5 9 4-2-5-9h8z"/>
</svg></div><div class="attach"><div class="d-flex align-items-center"><svg class="me-1" width="11" height="13"><use href="#imgfile"/></svg><a href="#">grafik-2.png</a><span class="ms-1">(44,826 Bytes)</span><svg class="fold" width="16" height="9"><use href="#chev"/></svg><svg class="ms-auto" width="12" height="14"><use href="#trash"/></svg></div>
<svg class="shot" width="487" height="250" viewBox="36 188 1461 750" preserveAspectRatio="none" font-size="24" fill="#222">
<path fill="#efefef" d="M36 188h1461v750H36z"/><path fill="#fff" d="M36 478h175v460H36z"/><path fill="#a6c8ee" d="M36 198h175v36H36zM237 285h1260v35H237zM237 491h1260v37H237zM1482 660h15v37h-15zM1482 786h15v36h-15z"/><path d="M218 192v746" stroke="#bbb" stroke-width="12"/><path d="M36 475h175" stroke="#888" stroke-width="3"/><path fill="#eee" d="M36 478h172v58H36z"/><g fill="#fff" stroke="#888" stroke-width="2"><path d="M30 266h131v45H30zM30 341h131v47H30zM30 419h131v45H30z"/></g><g fill="#ddd" stroke="#aaa"><path d="M121 268h38v41h-38zM121 343h38v43h-38zM121 421h38v41h-38z"/></g><g fill="none" stroke="#555" stroke-width="3"><path d="M131 286l8 7 8-7M131 362l8 7 8-7M131 440l8 7 8-7"/><path stroke-width="5" d="M173 288l7 11 18-20"/></g><path fill="#333" d="M62 495h7v12h5l-8 10-9-10h5zM116 517v-12h-5l9-10 8 10h-5v12zM165 505h5v3h-5zM172 505h5v3h-5zM179 505h5v3h-5zM36 188h64v3H36z"/>
<path fill="#aaa" d="M234 201h198v19H234z"/><path fill="#bbb" d="M270 201h18v19h-18zM310 201h18v19h-18zM355 201h20v19h-20z"/><path d="M432 210h1065" stroke="#ddd" stroke-width="2"/><path fill="#fff" d="M455 232h240v50H455z"/><text x="246" y="265" textLength="196">Individual-Daten I</text><text x="467" y="260" textLength="204">Individual-Daten II</text><text x="698" y="265" textLength="178">Erz.-Berechtigte</text><text x="901" y="265" textLength="135">Schulbesuch</text><text x="1064" y="265" textLength="194">Weitere Adressen</text><text x="1284" y="265" textLength="145">Laufbahninfo</text><text x="1453" y="265" textLength="43">För</text><path stroke="#bbb" d="M888 245v35M1049 245v35M1270 245v35M1440 245v35"/>
<g font-weight="700"><text x="256" y="310" textLength="287">Migrationshintergrund</text><text x="256" y="517" textLength="262">Vorschulentwicklung</text></g><g fill="#fff" stroke="#888" stroke-width="2"><path d="M253 354h26v25h-26zM681 353h375v45H681zM1090 353h147v45h-147zM1270 353h195v45h-195zM252 433h351v45H252zM681 433h375v45H681zM1090 433h375v45h-375zM250 562h372v45H250z"/><path stroke="#0078d7" d="M647 562h827v45H647z"/></g><path d="M258 366l6 7 12-14M1030 373l7 7 9-8M1030 452l7 7 9-8M1437 452l8 7 8-7M577 452l8 7 8-7M597 581l8 7 8-7M1447 581l8 7 8-7" fill="none" stroke="#555" stroke-width="2"/><text x="289" y="374" textLength="364">Migrationshintergrund vorhanden</text><g fill="#3c993c"><text x="680" y="347" textLength="132">Geburtsland</text><text x="1088" y="347" textLength="118">Zuzugsjahr</text><text x="251" y="426" textLength="326">Verkehrssprache in der Familie</text><text x="680" y="426" textLength="238">Geburtsland d. Mutter</text><text x="1088" y="426" textLength="238">Geburtsland d. Vaters</text></g><text x="1269" y="347" textLength="213">Ende Erstförderung</text><text x="686" y="383" textLength="135">Deutschland</text><text x="257" y="463" textLength="92">Arabisch</text><text x="687" y="463" textLength="97">Tunesien</text><text x="1095" y="463" textLength="97">Tunesien</text><text x="1295" y="386" textLength="28">. .</text><path fill="#ddd" stroke="#444" stroke-width="2" d="M1424 362h24v26h-24z"/><text x="1426" y="382" font-size="18">15</text><path fill="#e8e8e8" stroke="#aaa" d="M610 436h42v41h-42z"/><path d="M621 458h20M631 448v20" stroke="#111" stroke-width="4"/>
<text x="247" y="555" textLength="360">Dauer des Kindergartenbesuches</text><text x="644" y="555" textLength="265">Name des Kindergartens</text><text x="257" y="592" textLength="202">2 bis unter 3 Jahre</text><path fill="#0078d7" d="M650 569h216v28H650z"/><text x="652" y="592" fill="#fff" textLength="212">Velberter Straße 26</text>
<path stroke="#555" stroke-width="2" fill="#fff" d="M250 900h148v36H250zM475 900h364v36H475z"/><path fill="#fff" stroke="#555" stroke-width="2" d="M94 611h1387v315H94z"/><path fill="#eee" d="M1446 613h33v311h-33z"/><path fill="#ccc" d="M1449 834h28v36h-28z"/><path fill="#0078d7" d="M95 756h1345v33H95z"/><path stroke="#bbb" d="M580 611v314M727 611v314M1010 611v314"/><text x="1483" y="726">e</text>
<g><text x="98" y="641" textLength="137">Bezeichnung</text><text x="98" y="680" textLength="313">Urdenbacher Dorfstraße 59a</text><text x="98" y="714" textLength="197">Vagedesstraße 19</text><text x="98" y="748" textLength="236">Van-Douven-Straße 6</text><text x="98" y="816" textLength="184">Vereinsstraße 10</text><text x="98" y="850" textLength="178">Viehfahrtsweg 2</text><text x="98" y="884" textLength="168">Vinzenzplatz 1a</text><text x="98" y="917" textLength="168">Vlattenstraße 2</text><text x="584" y="641">PLZ</text><text x="586" y="680">40593</text><text x="586" y="714">40479</text><text x="586" y="748">40227</text><text x="586" y="816">40625</text><text x="586" y="850">40221</text><text x="586" y="884">40211</text><text x="586" y="917">40223</text><text x="733" y="641">Ort</text><text x="732" y="680" textLength="117">Düsseldorf</text><text x="732" y="714" textLength="117">Düsseldorf</text><text x="732" y="748" textLength="117">Düsseldorf</text><text x="732" y="816" textLength="117">Düsseldorf</text><text x="732" y="850" textLength="117">Düsseldorf</text><text x="732" y="884" textLength="117">Düsseldorf</text><text x="732" y="917" textLength="117">Düsseldorf</text><text x="1016" y="641">Straße</text><text x="1016" y="680" textLength="313">Urdenbacher Dorfstraße 59a</text><text x="1016" y="714" textLength="197">Vagedesstraße 19</text><text x="1016" y="748" textLength="236">Van-Douven-Straße 6</text><text x="1016" y="816" textLength="184">Vereinsstraße 10</text><text x="1016" y="850" textLength="178">Viehfahrtsweg 2</text><text x="1016" y="884" textLength="168">Vinzenzplatz 1a</text><text x="1016" y="917" textLength="168">Vlattenstraße 2</text></g><g fill="#fff"><text x="98" y="782" textLength="214">Velberter Straße 26</text><text x="586" y="782">40227</text><text x="732" y="782" textLength="117">Düsseldorf</text><text x="1016" y="782" textLength="214">Velberter Straße 26</text></g>
<g fill="none" stroke="#d72638" stroke-width="4"><ellipse cx="576" cy="252" rx="141" ry="29"/><ellipse cx="398" cy="506" rx="171" ry="23"/><ellipse cx="1450" cy="587" rx="44" ry="37"/><path d="M1336 612h111v314h-111z"/></g><path fill="none" stroke="#444" stroke-width="3" d="M1454 634l7-8 7 8M1454 904l6 8 6-8"/><path fill="#fff" stroke="#444" stroke-width="2" d="M1449 594v33l8-7 8 15 5-3-7-14h11z"/>
</svg></div></div></article>

 <article class="note-row d-flex"><div class="who" data-name="richter-01" data-date="2023-10-26 11:08" data-role="Administrator" data-note="0003485"></div><div class="said flex-grow-1">WEnn die Schulen den Dialog aus dem Anmeldemodul so gut finden, sollen sie ihn auch im Hauptfenster erhalten.</div></article>

 <article class="note-row d-flex"><div class="who" data-name="KD0677" data-date="2023-10-26 11:09" data-role="Reporter" data-note="0003486"></div><div class="said flex-grow-1">:-) Danke, gebe ich gerne weiter!</div></article>

 <article class="note-row d-flex"><div class="who" data-name="richter-01" data-date="2023-10-26 14:51" data-role="Administrator" data-note="0003488"></div><div class="said flex-grow-1">Wir haben nun folgende Punkte bearbeitet:
-Im Hauptfenster wird der gleiche "Kindergarten-Dialog" angezeigt wie im Anmeldemodul
-Der Gruppenprozess "Teilnahmenoten" wurde um die Note NE ergänzt
-Die Schulträgermerkmale" werden wieder mit der voher verwendeten Grid-Komponente angezeigt
-Der "Nicht-Autoedit-Modus" wird nun im Anmeldemodul besser unterstützt


Eine aktualisierte Progrmmdatei liegt hier:
www.download.ribeka.com/Software/SchILD/SchILDzentral/Alle Module/Einzeldateien/SCHILDZentral_2.0.31.10.zip</div></article>

 <article class="note-row d-flex"><div class="who" data-name="KD0677" data-date="2024-01-22 11:47" data-role="Reporter" data-note="0003912"></div><div class="said flex-grow-1">Ticket kann geschlossen werden.</div></article>
</section>

<template id="barTemplate">
<nav class="overbar d-flex align-items-center"><div class="brandtext d-flex justify-content-end">ort-Portal</div>
<div class="bar-actions ms-auto d-flex"><a class="bar-btn d-flex align-items-center justify-content-center"><svg class="me-1" width="14" height="13"><use href="#edit"/></svg>Eintrag erfassen</a><a class="bar-btn invite d-flex align-items-center justify-content-center"><svg class="me-1" width="16" height="13"><use href="#adduser"/></svg>Benutzer einladen</a></div>
<div class="bar-seg d-flex align-items-center">SchILDzentral Modul 2<svg class="ms-3" style="margin-top:-1px" width="9" height="7"><use href="#down"/></svg></div><div class="bar-seg account d-flex align-items-center"><svg fill="#fff" class="me-2" width="14" height="15"><use href="#user"/></svg>0000<svg class="ms-1" width="11" height="8"><use href="#down"/></svg></div></nav>
<div class="totop d-flex align-items-center justify-content-center"><svg width="10" height="10"><use href="#dblup"/></svg></div>
</template>
</main>
<script src="https://cdn.jsdelivr.net/npm/bootstrap@5.3.0/dist/js/bootstrap.bundle.min.js"></script>
<script>
const icon = (id, w, h, cls) => `<svg class="${cls || 'ic'}" width="${w}" height="${h}"><use href="#${id}"/></svg>`;
// author column of every note
document.querySelectorAll('.who').forEach(cell => {
  const d = cell.dataset;
  let out = `<div class="d-flex align-items-center">${icon('user', 11, 12)}<a href="#" class="nick">${d.name}</a></div>`;
  if (d.date) out += `<div class="stamp d-flex align-items-center gap-1">${icon('clock', 9, 9)}${d.date}${d.private ? icon('eye', 11, 8, 'ms-2') + d.private : ''}</div>`;
  if (d.role) out += `<div class="d-flex align-items-center"><span class="role-tag">${d.role}</span>${d.note ? icon('chain', 12, 12, 'chain-ic') + `<a href="#">−${d.note}</a>` : ''}</div>`;
  if (d.edited) out += `<div class="stamp d-flex align-items-center gap-1 mt-1">${icon('retweet', 11, 7, 'flex-shrink-0')}${d.edited}</div><div class="stamp"><a href="#">2 Überarbeitungen anzeigen</a></div>`;
  cell.innerHTML = out;
});
// one toolbar and one scroll-up button per screen height
for (const k of ['a', 'b', 'c']) {
  const part = document.getElementById('barTemplate').content.cloneNode(true);
  part.querySelector('.overbar').classList.add('over-' + k);
  part.querySelector('.totop').classList.add('up-' + k);
  document.querySelector('.page-frame').append(part);
}
</script>
</body>
</html>
